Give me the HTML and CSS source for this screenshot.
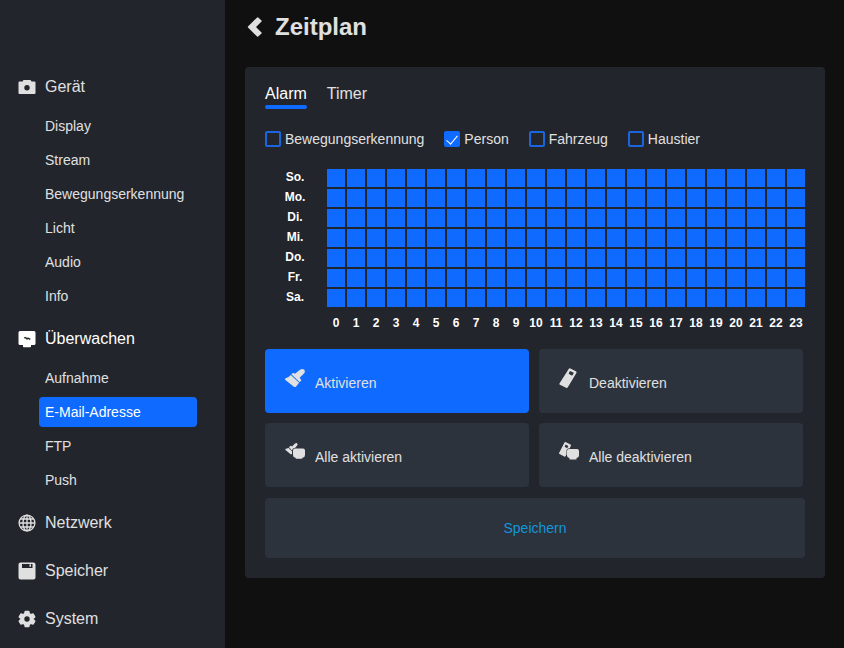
FILE: index.html
```
<!DOCTYPE html>
<html lang="de">
<head>
    <meta charset="UTF-8">
    <meta name="viewport" content="width=device-width, initial-scale=1.0">
    <title>Zeitplan</title>
    <link rel="stylesheet" href="styles.css">
</head>
<body>
    <nav class="sidebar">
        <button type="button" class="nav-head">
            <svg class="nav-icon" viewBox="0 0 18 18" fill="currentColor"><path fill-rule="evenodd" d="M1.500 3.500h3L5.500 2h7l1 1.500h3q1 0 1 1v10.500q0 1-1 1h-15q-1 0-1-1V4.500q0-1 1-1zM9 7a2.700 2.700 0 1 0 0 5.400a2.700 2.700 0 1 0 0-5.400z"/></svg>
            Gerät
        </button>
        <ul class="nav-list">
            <li><a href="#">Display</a></li>
            <li><a href="#">Stream</a></li>
            <li><a href="#">Bewegungserkennung</a></li>
            <li><a href="#">Licht</a></li>
            <li><a href="#">Audio</a></li>
            <li><a href="#">Info</a></li>
        </ul>

        <button type="button" class="nav-head open">
            <svg class="nav-icon" viewBox="0 0 18 18"><path fill="currentColor" d="M2 1h14q1.500 0 1.500 1.500v11q0 1.500-1.500 1.500h-3v1.500q0 .7-.7.7H5.700q-.7 0-.7-.7V15H2Q.5 15 .5 13.500v-11Q.5 1 2 1z"/><path fill="none" stroke="#22252c" stroke-width="1.300" d="M6 8l1.500-.5L9 9l1-1l1.500 1.200l.8-.7"/></svg>
            Überwachen
        </button>
        <ul class="nav-list">
            <li><a href="#">Aufnahme</a></li>
            <li><a href="#" class="active" aria-current="page">E-Mail-Adresse</a></li>
            <li><a href="#">FTP</a></li>
            <li><a href="#">Push</a></li>
        </ul>

        <button type="button" class="nav-head">
            <svg class="nav-icon" viewBox="0 0 18 18" fill="none" stroke="currentColor" stroke-width="1.300"><circle cx="9" cy="9" r="7.900"/><ellipse cx="9" cy="9" rx="4" ry="7.900"/><path d="M9 1v16M1 9h16M2.200 5h13.600M2.200 13h13.600"/></svg>
            Netzwerk
        </button>
        <button type="button" class="nav-head">
            <svg class="nav-icon" viewBox="0 0 18 18" fill="currentColor"><path fill-rule="evenodd" d="M2.500 .5h13q2 0 2 2v13q0 2-2 2h-13q-2 0-2-2v-13q0-2 2-2zM4 2v4h10.500V2zM11.500 2.300h1.500v2.500h-1.500z"/></svg>
            Speicher
        </button>
        <button type="button" class="nav-head">
            <svg class="nav-icon" viewBox="0 0 18 18"><path fill="currentColor" stroke="currentColor" stroke-linejoin="round" stroke-width="1.500" d="M7.300 1.500h3.400l.6 2.300l1.500.9l2.300-.7l1.600 2.900L15 8.500v1l1.700 1.600l-1.600 2.900l-2.300-.7l-1.500.9l-.6 2.300H7.300l-.6-2.300l-1.500-.9l-2.300.7l-1.600-2.900L3 9.500v-1L1.300 6.900L2.900 4l2.300.7l1.500-.9z"/><circle cx="9" cy="9" r="2.700" fill="#22252c"/></svg>
            System
        </button>
    </nav>

    <main class="content">
        <header class="title">
            <a href="#" class="back" aria-label="Zurück">
                <svg viewBox="0 0 16 20"><path fill="currentColor" d="M11.200.4l3.300 3.100q.5.500 0 1L9 10l5.500 5.500q.5.500 0 1l-3.300 3.100q-.5.400-1 0L1 10.500q-.5-.5 0-1L10.200.4q.5-.4 1 0z"/></svg>
            </a>
            <h1>Zeitplan</h1>
        </header>

        <section class="panel">
            <div class="tabs">
                <button type="button" class="tab active">Alarm</button>
                <button type="button" class="tab">Timer</button>
            </div>

            <div class="types">
                <label><input type="checkbox">Bewegungserkennung</label>
                <label><input type="checkbox" checked>Person</label>
                <label><input type="checkbox">Fahrzeug</label>
                <label><input type="checkbox">Haustier</label>
            </div>

            <table class="schedule">
                <tbody id="days"></tbody>
                <tfoot>
                    <tr id="hours"><td></td></tr>
                </tfoot>
            </table>

            <div class="actions">
                <button type="button" class="action active">
                    <svg viewBox="0 0 20 20" fill="currentColor"><path d="M10 5.800L15 1.800q2.500-1.800 4.200 0q1.500 2-.5 4L14.600 9.800l1.200 1.400q.7 1 0 1.800l-1.100 1.200L6.300 6.300l1.200-1q1.200-.7 2.500.5z"/><path d="M5.800 6.900l8.300 7.900l-3 3.600q-1.200 1-2.500 0L.4 12q-.8-1 .2-1.700q2.600-.6 5.200-3.400z"/></svg>
                    Aktivieren
                </button>
                <button type="button" class="action">
                    <svg viewBox="0 0 20 20" fill="currentColor"><path fill-rule="evenodd" d="M9.700.9q.6-1 1.700-.5l5.500 2.900q1 .6.500 1.600L8.800 19.300q-.6 1-1.700.5L.9 16.700q-.8-.5-.3-1.400zM11 2.900L9.600 5.600q2 2.200 4 1.700l1.200-2.600z"/></svg>
                    Deaktivieren
                </button>
                <button type="button" class="action">
                    <svg viewBox="0 0 20 20" fill="currentColor"><path d="M7 4.500L9.800 1.800q1.500-1.300 2.500-.3q.8 1.100-.3 2.300L10.200 5.700Q7.300 6 7 8.500L4 5.200l1-1q1-.8 2 .3z"/><path d="M3.400 5.700L7 9.200v2.900q-.9.500-1.700-.2L.5 7.900q-.5-.7.200-1.100q1.500-.1 2.700-1.100z"/><path d="M10 6.500h8q2 0 2 2v4.500q0 2.500-2.500 2.700l-.5 1h-6l-.5-1Q8 15.500 8 13V8.500q0-2 2-2z"/></svg>
                    Alle aktivieren
                </button>
                <button type="button" class="action">
                    <svg viewBox="0 0 20 20" fill="currentColor"><path fill-rule="evenodd" d="M5.500.6q.6-.9 1.500-.4l4.500 2.400q.8.500.3 1.300L10.700 6.300Q7.500 6.500 7.500 9v3.500L6.500 14.300q-.5.700-1.300.2L.5 12.100q-.8-.5-.3-1.300zM6.700 2.500L5.600 4.700l2.600 1.500l1.200-2.200z"/><path d="M10 7h8q2 0 2 2v4.500q0 2-2.500 2.500v1.500h-7V16Q8 15.500 8 13.500V9q0-2 2-2z"/></svg>
                    Alle deaktivieren
                </button>
            </div>
            <button type="button" class="save">Speichern</button>
        </section>
    </main>

    <script>
        const names = ['So.', 'Mo.', 'Di.', 'Mi.', 'Do.', 'Fr.', 'Sa.'];
        const days = document.getElementById('days');
        const hours = document.getElementById('hours');

        names.forEach(name => {
            const row = days.insertRow();
            row.innerHTML = `<th scope="row">${name}</th>`;
            for (let h = 0; h < 24; h++) {
                const slot = document.createElement('button');
                slot.type = 'button';
                slot.className = 'slot on';
                slot.setAttribute('aria-label', `${name} ${h} Uhr`);
                slot.onclick = () => slot.classList.toggle('on');
                row.insertCell().appendChild(slot);
            }
        });

        for (let h = 0; h < 24; h++) {
            hours.insertAdjacentHTML('beforeend', `<th scope="col">${h}</th>`);
        }
    </script>
</body>
</html>
```

FILE: styles.css
```
* {
    box-sizing: border-box;
}
body {
    margin: 0;
    display: flex;
    min-height: 100vh;
    background-color: #101010;
    color: #e0e0e0;
    font-family: "Liberation Sans", Arial, sans-serif;
    font-size: 14px;
}
button {
    margin: 0;
    padding: 0;
    border: none;
    background: none;
    color: inherit;
    font: inherit;
    cursor: pointer;
}
svg {
    display: block;
    flex: none;
}
.sidebar {
    flex: none;
    width: 225px;
    padding-top: 62px;
    background-color: #22252c;
}
.nav-head {
    display: flex;
    align-items: center;
    gap: 9px;
    width: 100%;
    height: 48px;
    padding: 2px 0 0 18px;
    font-size: 16px;
}
.nav-head.open {
    color: #fff;
}
.nav-icon {
    width: 18px;
    height: 18px;
}
.nav-list {
    display: flex;
    flex-direction: column;
    gap: 4px;
    margin: 0;
    padding: 1px 28px 3px 39px;
    list-style: none;
}
.nav-list a {
    display: block;
    padding: 0 6px;
    border-radius: 4px;
    color: inherit;
    line-height: 30px;
    text-decoration: none;
}
.nav-list a.active {
    background-color: #0f6aff;
    color: #fff;
}
.content {
    flex: 1;
    min-width: 0;
    padding: 0 19px 20px 20px;
}
.title {
    display: flex;
    align-items: center;
    gap: 12px;
    height: 54px;
    margin-bottom: 13px;
    padding-left: 2px;
}
.title h1 {
    margin: 0;
    font-size: 24px;
}
.back {
    color: inherit;
}
.back svg {
    width: 16px;
    height: 20px;
}
.panel {
    padding: 16px 20px 20px;
    border-radius: 4px;
    background-color: #22252c;
}
.tabs {
    display: flex;
    gap: 20px;
    margin-bottom: 20px;
}
.tab {
    border-bottom: 4px solid transparent;
    font-size: 16px;
    line-height: 22px;
}
.tab.active {
    position: relative;
    color: #fff;
}
.tab.active::after {
    content: "";
    position: absolute;
    left: 0;
    right: 0;
    bottom: -4px;
    height: 4px;
    border-radius: 2px;
    background-color: #0f6aff;
}
.types {
    display: flex;
    flex-wrap: wrap;
    gap: 20px;
    margin-bottom: 20px;
}
.types label {
    display: flex;
    align-items: center;
    gap: 4px;
    line-height: 20px;
}
.types input {
    appearance: none;
    width: 16px;
    height: 16px;
    margin: 0;
    border: 2px solid #1a66e0;
    border-radius: 2px;
}
.types input:checked {
    display: grid;
    place-items: center;
    border-color: #0f6aff;
    background-color: #0f6aff;
}
.types input:checked::before {
    content: "";
    width: 5px;
    height: 10px;
    margin-bottom: 2px;
    border: solid #fff;
    border-width: 0 1px 1px 0;
    transform: rotate(40deg);
}
.schedule {
    width: calc(100% + 4px);
    margin: -2px -2px 10px;
    border-spacing: 2px;
    table-layout: fixed;
    color: #fff;
    font-size: 12px;
}
.schedule th,
.schedule td {
    height: 18px;
    padding: 0;
    line-height: 16px;
}
.schedule tr > :first-child {
    width: 60px;
}
.schedule tbody th {
    padding-bottom: 2px;
}
.schedule tfoot th {
    height: 28px;
}
.slot {
    display: block;
    width: 100%;
    height: 18px;
    background-color: #2d333d;
}
.slot.on {
    background-color: #0f6aff;
}
.actions {
    display: grid;
    grid-template-columns: 1fr 1fr;
    gap: 10px;
    margin-bottom: 11px;
    padding-right: 2px;
}
.action {
    display: flex;
    align-items: baseline;
    gap: 10px;
    height: 64px;
    padding: 19px 20px 0;
    border-radius: 4px;
    background-color: #2d333c;
}
.action.active {
    background-color: #0f6aff;
}
.action svg {
    width: 20px;
    height: 20px;
}
.save {
    display: block;
    width: 100%;
    height: 60px;
    border-radius: 4px;
    background-color: #2d333c;
    color: #1296db;
}
```
